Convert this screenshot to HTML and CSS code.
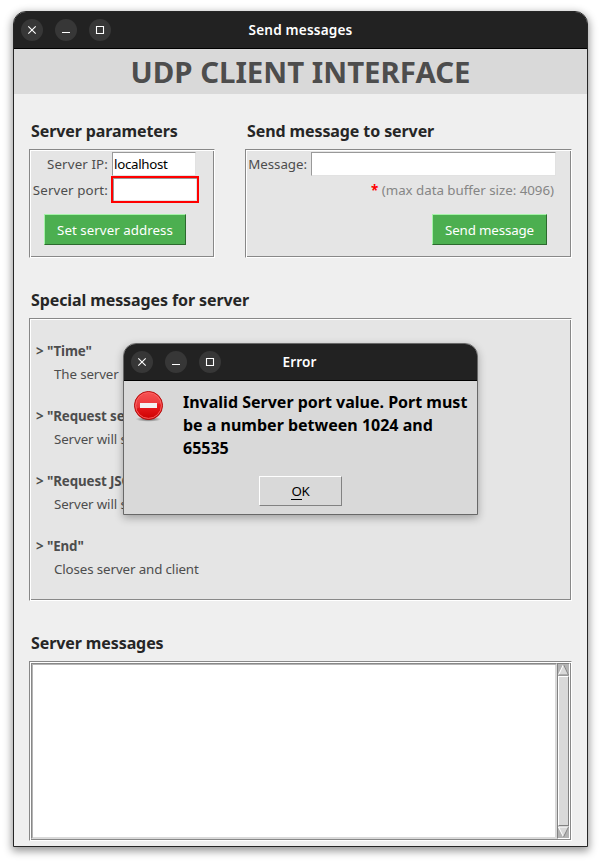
FILE: index.html
```html
<!DOCTYPE html>
<html lang="en">
<head>
<meta charset="utf-8">
<title>Send messages</title>
<link rel="stylesheet" href="styles.css">
</head>
<body>
<div class="window">
  <div class="titlebar">
    <div class="controls">
      <svg width="22" height="22" viewBox="0 0 22 22"><circle cx="11" cy="11" r="11"/><path d="M7.3 7.3l7.4 7.4M14.7 7.3l-7.4 7.4"/></svg>
      <svg width="22" height="22" viewBox="0 0 22 22"><circle cx="11" cy="11" r="11"/><path d="M7 13.5h8"/></svg>
      <svg width="22" height="22" viewBox="0 0 22 22"><circle cx="11" cy="11" r="11"/><path d="M7.5 7.5h7v7h-7z"/></svg>
    </div>
    <span class="caption">Send messages</span>
  </div>
  <h1 class="banner"><span>UDP CLIENT INTERFACE</span></h1>
  <main class="content">
    <div class="top-row">
      <section class="params">
        <h2>Server parameters</h2>
        <div class="panel form-panel">
          <div class="field"><label>Server IP:</label><div class="entry">localhost</div></div>
          <div class="field port"><label>Server port:</label><div class="entry invalid"></div></div>
          <button class="action set-address">Set server address</button>
        </div>
      </section>
      <section class="send">
        <h2>Send message to server</h2>
        <div class="panel form-panel">
          <div class="field"><label>Message:</label><div class="entry message"></div></div>
          <p class="note"><b>*</b> (max data buffer size: 4096)</p>
          <button class="action send-message">Send message</button>
        </div>
      </section>
    </div>
    <section class="special">
      <h2>Special messages for server</h2>
      <dl class="panel commands">
        <dt>&gt; "Time"</dt><dd>The server</dd>
        <dt>&gt; "Request se</dt><dd>Server will s</dd>
        <dt>&gt; "Request JSO</dt><dd>Server will s</dd>
        <dt>&gt; "End"</dt><dd>Closes server and client</dd>
      </dl>
    </section>
    <section class="log">
      <h2>Server messages</h2>
      <div class="panel log-panel">
        <div class="textarea"></div>
        <div class="scrollbar">
          <svg width="11" height="12" viewBox="0 0 11 12"><path class="face" d="M5.5 0L0 11h11z"/><path class="light" d="M5.5 0.5L0.5 11"/><path class="dark" d="M5.5 0.5L10.5 11H0.5"/></svg>
          <div class="thumb"></div>
          <svg width="11" height="12" viewBox="0 0 11 12"><path class="face" d="M0 1h11L5.5 11z"/><path class="light" d="M10.5 1H0.5L5.5 11"/><path class="dark" d="M10.5 1L5.5 11"/></svg>
        </div>
      </div>
    </section>
  </main>
</div>

<div class="dialog">
  <div class="titlebar">
    <div class="controls">
      <svg width="22" height="22" viewBox="0 0 22 22"><circle cx="11" cy="11" r="11"/><path d="M7.3 7.3l7.4 7.4M14.7 7.3l-7.4 7.4"/></svg>
      <svg width="22" height="22" viewBox="0 0 22 22"><circle cx="11" cy="11" r="11"/><path d="M7 13.5h8"/></svg>
      <svg width="22" height="22" viewBox="0 0 22 22"><circle cx="11" cy="11" r="11"/><path d="M7.5 7.5h7v7h-7z"/></svg>
    </div>
    <span class="caption">Error</span>
  </div>
  <div class="dialog-body">
    <svg class="error-icon" width="32" height="32" viewBox="0 0 32 32">
      <defs>
        <linearGradient id="red" x1="0" y1="0" x2="0" y2="1"><stop offset="0" stop-color="#f63e3e"/><stop offset=".5" stop-color="#e91c20"/><stop offset="1" stop-color="#cc0000"/></linearGradient>
        <radialGradient id="shade"><stop offset="0" stop-color="#000" stop-opacity=".6"/><stop offset="1" stop-color="#000" stop-opacity="0"/></radialGradient>
      </defs>
      <ellipse cx="15.5" cy="29.2" rx="13" ry="2.6" fill="url(#shade)"/>
      <circle cx="15.5" cy="15.5" r="14" fill="url(#red)" stroke="#b20a0a"/>
      <circle cx="15.5" cy="15.5" r="12.9" fill="none" stroke="#fa6a6a" stroke-width=".9"/>
      <path d="M3 18.7A12.7 12.7 0 0 1 28.2 13.5Q16 13.5 3 18.7z" fill="#fff" opacity=".12"/>
      <path d="M7 13h17v5H7z" fill="#f3f3f3"/>
    </svg>
    <p class="error-text">Invalid Server port value. Port must<br>be a number between 1024 and<br>65535</p>
  </div>
  <button class="ok"><span>O</span>K</button>
</div>
</body>
</html>
```
FILE: styles.css
```css
* { box-sizing: border-box; margin: 0; padding: 0; }
body {
  width: 601px; height: 863px; padding: 11px 13px; overflow: hidden;
  background: #fff; color: #4d4d4d;
  font: 13.33px/18px "Noto Sans", sans-serif;
}
.window {
  width: 575px; height: 836px; overflow: hidden;
  border: 1px solid #262626; border-radius: 13px 13px 0 0;
  background: #efefef;
  box-shadow: 0 3px 9px 1px rgba(0,0,0,.42);
}
.titlebar {
  height: 37px; display: grid; grid-template-columns: 1fr auto 1fr; align-items: center;
  padding: 0 7px; background: #222; border-bottom: 1px solid #000; color: #fff;
}
.controls { display: flex; gap: 12px; }
.controls svg { display: block; }
.controls circle { fill: #373737; }
.controls path { fill: none; stroke: #fff; stroke-width: 1.1; }
.caption { font-size: 13.6px; font-weight: 600; letter-spacing: .17px; white-space: nowrap; }
.dialog .caption { position: relative; left: -1px; }
.banner {
  height: 45px; background: #d9d9d9; text-align: center;
  font-size: 29.4px; line-height: 46px; color: #4d4d4d;
}
.content { padding: 26px 15px 0; }
h2 { height: 29px; padding-left: 2px; font-size: 16px; line-height: 22px; letter-spacing: -.1px; color: #262626; white-space: nowrap; }
.panel {
  padding: 2px; background: #e5e5e5;
  border: 1px solid; border-color: #888 #fff #fff #888;
  box-shadow: inset 1px 1px #fff, inset -1px -1px #888;
}
.top-row { display: flex; gap: 30px; }
.params { width: 186px; }
.send { width: 327px; }
.form-panel { height: 109px; display: flex; flex-direction: column; }
.field { height: 24px; display: flex; align-items: center; }
.field label { width: 77px; padding-right: 1px; text-align: right; letter-spacing: .12px; white-space: nowrap; }
.send .field label { width: 60px; letter-spacing: -.05px; }
.entry {
  width: 84px; height: 24px; margin-left: 3px; padding-left: 1px; line-height: 22px; letter-spacing: -.3px;
  background: #fff; color: #000;
  border: 1px solid; border-color: #999 #e2e2e2 #e2e2e2 #999;
}
.field.port { height: 27px; }
.entry.invalid { width: 88px; height: 27px; margin-left: 2px; border: 2px solid #f00; box-shadow: inset 1px 1px #999, inset -1px -1px #e2e2e2; }
.entry.message { width: 245px; }
.action {
  height: 31px; background: #4caf50; color: #fff; white-space: nowrap;
  font: inherit; border: 1px solid; border-color: #a5f3a8 #2c692e #2c692e #a5f3a8;
}
.set-address { width: 142px; margin: 11px 0 0 12px; letter-spacing: .04px; }
.note { height: 27px; padding-right: 15px; text-align: right; line-height: 29px; letter-spacing: -.03px; color: #858585; }
.note b { color: #f00; }
.send-message { width: 115px; margin: 11px 22px 0 auto; letter-spacing: -.15px; }
.special { margin-top: 31px; }
.commands { height: 283px; padding: 21px 0 0 6px; }
dt { height: 23px; font-weight: bold; line-height: 23px; letter-spacing: -.1px; }
dd { height: 42px; padding-left: 18px; line-height: 23px; letter-spacing: -.12px; }
.log { margin-top: 31px; }
.log-panel { height: 180px; display: flex; padding: 1px; }
.textarea { flex: 1; background: #fff; border: 1px solid; border-color: #888 #d9d9d9 #d9d9d9 #888; box-shadow: inset 1px 1px #b5b5b5, inset -1px -1px #d9d9d9; }
.scrollbar { width: 13px; display: flex; flex-direction: column; background: #b3b3b3; border: 1px solid; border-color: #828282 #fff #fff #828282; }
.thumb { flex: 1; background: #d9d9d9; border: 1px solid; border-color: #fff #828282 #828282 #fff; }
.face { fill: #d9d9d9; }
.light, .dark { fill: none; stroke: #fff; }
.dark { stroke: #828282; }

/* Modal above the main window */
.dialog {
  position: absolute; left: 123px; top: 343px; width: 355px; height: 172px; overflow: hidden;
  background: #d9d9d9; color: #000; border: 1px solid #686868; border-radius: 13px 13px 0 0;
  box-shadow: 0 3px 8px rgba(0,0,0,.3);
}
.dialog-body { display: flex; height: 95px; padding: 9px 0 0 9px; }
.error-icon { flex: none; }
.error-text { margin-left: 18px; padding-top: 1px; font-size: 16px; font-weight: bold; line-height: 23px; white-space: nowrap; }
.ok {
  display: block; width: 83px; height: 30px; margin-left: 135px; background: #d9d9d9; color: #000;
  font: inherit; letter-spacing: -.3px; border: 1px solid; border-color: #fff #828282 #828282 #fff;
}
.ok span { border-bottom: 1px solid #000; display: inline-block; line-height: 15px; }
```
